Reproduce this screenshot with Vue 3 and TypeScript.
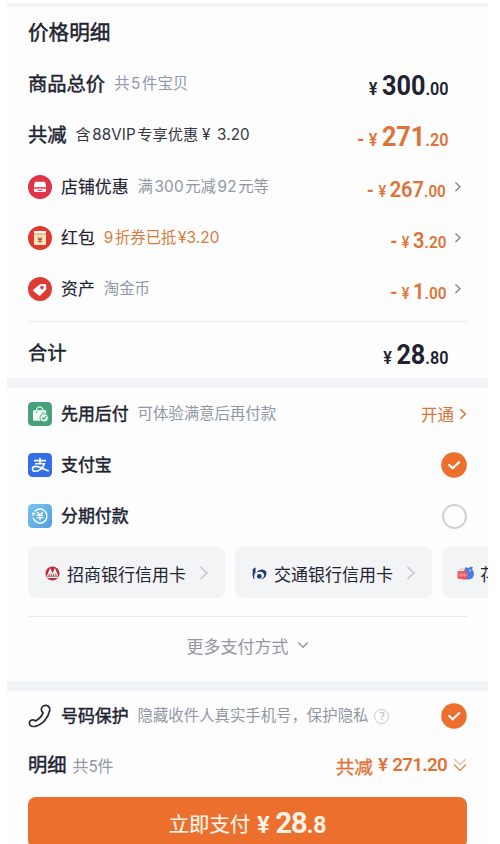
<script setup lang="ts">
interface Discount {
  icon: 'shop' | 'packet' | 'tag'
  label: string
  note: string[]
  accent?: boolean
  whole: string
  cents: string
}

const discounts: Discount[] = [
  { icon: 'shop', label: '店铺优惠', note: ['满', '300', '元减', '92', '元等'], whole: '267', cents: '.00' },
  { icon: 'packet', label: '红包', note: ['', '9', '折券已抵', '¥3.20'], accent: true, whole: '3', cents: '.20' },
  { icon: 'tag', label: '资产', note: ['淘金币'], whole: '1', cents: '.00' },
]
</script>

<template>
  <main class="sheet">
    <section class="details">
      <header class="row"><h1>价格明细</h1></header>
      <div class="row">
        <h2>商品总价</h2>
        <span class="note total-note">共<i>5</i>件宝贝</span>
        <span class="price big"><small>¥</small><b>300</b><em>.00</em></span>
      </div>
      <div class="row">
        <h2>共减</h2>
        <span class="note dark">含<i>88VIP</i>专享优惠<i class="yen">¥</i><i>3.20</i></span>
        <span class="price big orange"><s>-</s><small>¥</small><b>271</b><em>.20</em></span>
      </div>
      <div v-for="d in discounts" :key="d.label" class="row">
        <svg v-if="d.icon === 'shop'" class="icon" viewBox="0 0 24 24">
          <circle cx="12" cy="12" r="12" fill="#df3348" />
          <path d="M8 6.7h8q1 0 1.3 1l.7 3v1.6H6v-1.6l.7-3q.3-1 1.3-1z" fill="#fff" />
          <path d="M6 13.3q1.5 1.3 3 0q1.500 1.300 3 0q1.500 1.300 3 0q1.500 1.300 3 0v2.200q0 1.500-1.500 1.500h-9Q6 17 6 15.500z" fill="#fff" />
          <path d="M9.500 15.300h5" stroke="#df3348" stroke-width="1" />
        </svg>
        <svg v-else-if="d.icon === 'packet'" class="icon" viewBox="0 0 24 24">
          <circle cx="12" cy="12" r="12" fill="#e03a30" />
          <rect x="6" y="5" width="12" height="14" rx="1" fill="#fbe3bd" />
          <path d="M6 5h12v3H6z" fill="#fff8e9" />
          <path d="M6 8h12" stroke="#df6950" stroke-width=".8" />
          <path d="m10 11 2 2.500 2-2.500M9.800 13.500h4.400M9.800 15.300h4.400M12 13.500v3.500" fill="none" stroke="#a55b35" stroke-width="1.100" />
        </svg>
        <svg v-else class="icon" viewBox="0 0 24 24">
          <circle cx="12" cy="12" r="12" fill="#df3b34" />
          <path d="m5.500 12.600 6.200-5.200q.6-.5 1.400-.5h3.700q1.200 0 1.300 1.200l.2 3.600q0 .8-.5 1.400L12.500 18.200q-1 1-2 .1l-5-4q-.9-.9 0-1.700z" fill="#fff" />
          <circle cx="14" cy="10.600" r="1.800" fill="#cf4545" />
        </svg>
        <h3 class="regular">{{ d.label }}</h3>
        <span class="note" :class="{ accent: d.accent }"><template v-for="(part, n) in d.note" :key="n"><i v-if="n % 2">{{ part }}</i><template v-else>{{ part }}</template></template></span>
        <span class="price orange"><s>-</s><small>¥</small><b>{{ d.whole }}</b><em>{{ d.cents }}</em></span>
        <svg class="go" viewBox="0 0 8 12"><path d="m1.500 1.500 4.500 4.300-4.500 4.300" /></svg>
      </div>
      <div class="rule"></div>
      <div class="row sum">
        <h2>合计</h2>
        <span class="price big"><small>¥</small><b>28</b><em>.80</em></span>
      </div>
    </section>

    <section class="payment">
      <div class="row">
        <svg class="icon" viewBox="0 0 24 24">
          <rect width="24" height="24" rx="4.500" fill="#48a17b" />
          <path d="M8.500 9V7.800Q9 4.800 11.700 4.800T14.900 7.800V9" fill="none" stroke="#d7f1e5" stroke-width="1.200" />
          <path d="M6 8.300h11.200q1 0 1 1V13l-5 5.800H6.500q-1.500 0-1.500-1.500v-8q0-1 1-1z" fill="#effff7" />
          <circle cx="8.600" cy="10.300" r=".7" fill="#48a17b" /><circle cx="14.900" cy="10.300" r=".7" fill="#48a17b" />
          <circle cx="16.200" cy="15.800" r="4.100" fill="#e9fff5" stroke="#48a17b" stroke-width=".9" />
          <path d="m14.200 15.700 1.600 1.500 2.700-3" fill="none" stroke="#48a17b" stroke-width="1.200" />
        </svg>
        <h3>先用后付</h3>
        <span class="note">可体验满意后再付款</span>
        <a class="open">开通<svg viewBox="0 0 8 12"><path d="m1.300 1.200 5 4.800-5 4.800" /></svg></a>
      </div>
      <div class="row">
        <svg class="icon" viewBox="0 0 24 24">
          <rect width="24" height="24" rx="4.500" fill="#346fe7" />
          <path d="M6 7.600h12M12 4.700v5.600M7.200 10.700h9.200C15 15 11.200 18.200 7.300 18.200c-3.700 0-3.900-4.600.2-4.800 4.400-.2 8.300 3 13.300 4.700" fill="none" stroke="#fff" stroke-width="1.600" />
        </svg>
        <h3>支付宝</h3>
        <svg class="check" viewBox="0 0 26 26"><circle cx="13" cy="13" r="12.800" /><path d="m8.300 13 3.300 3.300 6.500-6.100" /></svg>
      </div>
      <div class="row">
        <svg class="icon" viewBox="0 0 24 24">
          <defs><linearGradient id="sky" x2="1" y2="1"><stop stop-color="#76c5ed" /><stop offset="1" stop-color="#559ee1" /></linearGradient></defs>
          <rect width="24" height="24" rx="4.500" fill="url(#sky)" />
          <path d="M6.600 7.500a7 7 0 1 1-1.400 6.300M5 11.700V8.600M5 9.700l2.600-.2" fill="none" stroke="#fff" stroke-width="1.400" />
          <path d="m9.200 8 2.800 3.200L14.800 8M8.700 11.300h6.600M8.700 13.700h6.600M12 11v5.600" fill="none" stroke="#fff" stroke-width="1.300" />
        </svg>
        <h3>分期付款</h3>
        <span class="radio"></span>
      </div>
      <div class="banks">
        <div class="bank">
          <svg class="logo" viewBox="0 0 16 16">
            <circle cx="8" cy="8" r="7.500" fill="#b72e3e" />
            <path d="m2.600 11 2.900-7.200L8 9.700l2.500-5.900 2.900 7.200M5.500 5v6M10.500 5v6M2.300 12.200h11.400" fill="none" stroke="#fff" stroke-width="1.250" />
          </svg>
          <span>招商银行信用卡</span>
          <svg class="chip-go" viewBox="0 0 10 16"><path d="m1.500 2 6.500 6-6.500 6" /></svg>
        </div>
        <div class="bank">
          <svg class="logo" viewBox="0 0 16 16">
            <path d="M3.800 1.500v5.400Q1.500 9.400 2.800 14.500-.2 12 .8 7.500V3.200z" fill="#223c73" />
            <path d="M4.600 7C7.500 2.700 14 3 15.200 6.500c1 4-2 7.500-6 7.800 3.700-2.100 4.400-4.100 3.300-6.200C11 5.700 7.400 5.600 4.600 7z" fill="#223c73" />
            <circle cx="7.800" cy="11" r="2.500" fill="#223c73" />
          </svg>
          <span>交通银行信用卡</span>
          <svg class="chip-go" viewBox="0 0 10 16"><path d="m1.500 2 6.500 6-6.500 6" /></svg>
        </div>
        <div class="bank">
          <svg class="logo flower" viewBox="0 0 18 16">
            <path d="M7 4.500 9 2l2 1.300q2-2.300 5-1.300l-1.100 2q2.400 2 2.100 5.300-.4 4.700-5.400 5.100H6z" fill="#477ce4" />
            <path d="M1.500 6h9.200v7.500q-4.500 1.500-10.200 0V7z" fill="#e9585c" />
            <path d="M1.500 10h8.700M4 7.800V12M7.300 7.800V12M3.500 5.500V4h4v1.500" stroke="#f7a8a8" stroke-width=".8" fill="none" />
            <circle cx="13" cy="5.500" r="1" fill="#b9d4ff" />
          </svg>
          <span>花呗</span>
        </div>
      </div>
      <div class="rule second"></div>
      <div class="more">更多支付方式<svg viewBox="0 0 12 8"><path d="m1.300 1.500 4.700 4.700 4.700-4.700" /></svg></div>
    </section>

    <section class="checkout">
      <div class="row privacy">
        <svg class="icon phone" viewBox="0 0 24 24">
          <path d="M15.700 1.800C18.600.4 22.400 2.300 21.700 6.500 20.300 14 14.500 20.700 7.200 22.300 3 23.200.8 21 1.600 17.900 2.100 16.300 4.600 15.200 6.500 16.300L7.600 17C11.400 14.800 13.800 12 15.100 8.600 12.500 6.700 12.800 3.300 15.700 1.800z" />
        </svg>
        <h3>号码保护</h3>
        <span class="note">隐藏收件人真实手机号，保护隐私</span>
        <span class="help">?</span>
        <svg class="check" viewBox="0 0 26 26"><circle cx="13" cy="13" r="12.800" /><path d="m8.300 13 3.300 3.300 6.500-6.100" /></svg>
      </div>
      <div class="row summary">
        <h2>明细</h2>
        <span class="count">共5件</span>
        <span class="saved">共减<b class="saved-yen">¥</b><b>271.20</b><svg viewBox="0 0 14 14"><path class="faint" d="m1 1 6 5.500L13 1" /><path d="m1 6.500 6 6 6-6" /></svg></span>
      </div>
      <button type="button">立即支付<span class="pay"><small>¥</small><b>28</b><em>.8</em></span></button>
    </section>
  </main>
</template>

<style>
body { background: #fff; overflow: hidden; }
</style>

<style scoped>
* { box-sizing: border-box; }
.sheet {
  width: 481px;
  height: 844px;
  margin-left: 7px;
  padding-top: 3px;
  overflow: hidden;
  background: #fdfdfd;
  color: #20222f;
  font-family: Inter, "Noto Sans CJK SC", sans-serif;
  white-space: nowrap;
}
section { padding: 0 21px; }
.details { border-top: 4px solid #f4f4f6; height: 375px; }
.row { display: flex; align-items: center; height: 51.35px; }
h1, h2, h3 { margin: 0; font-weight: 400; -webkit-text-stroke: .45px currentColor; }
h1 { font-size: 20.6px; line-height: 30px; }
h2 { font-size: 19.3px; line-height: 28px; }
h3 { font-size: 16.9px; line-height: 26px; }
h3.regular { -webkit-text-stroke-width: .12px; }
i, em { font-style: normal; }
.icon { flex: none; width: 24px; height: 24px; margin-right: 9px; }
.note { margin-left: 9px; color: #9297a6; font-size: 15.4px; line-height: 24px; }
.note i { margin: 0 1.5px; letter-spacing: .1px; }
.note.dark { color: #333541; font-size: 15.2px; }
.note.dark .yen { margin: 0 5px 0 4px; }
.note.accent { color: #d77b3e; }
.note.accent i:first-child { margin-left: 0; }
.price {
  display: flex;
  align-items: baseline;
  margin-left: auto;
  margin-right: 19px;
  padding-top: 4px;
  font-family: Roboto, sans-serif;
  font-weight: 700;
  transform: scaleX(.9);
  transform-origin: right;
}
.price b { font-size: 22.300px; line-height: 26px; font-weight: 600; }
.price small { margin-right: 4px; font-size: 16px; font-weight: 500; }
.price em { font-size: 17px; font-weight: 600; }
.price s { margin-right: 5px; text-decoration: none; font-size: 20px; }
.price.big b { font-size: 28px; line-height: 32px; font-weight: 700; }
.price.big small { font-size: 18px; margin-right: 5px; font-weight: 600; }
.price.big em { font-size: 18px; }
.orange { color: #dd7338; }
.row > .go { width: 8px; height: 12px; margin-left: -11px; margin-right: 5px; fill: none; stroke: #858791; stroke-width: 1.400; }
.rule { height: 1px; margin-top: 6px; background: #eaeaed; }
.sum { height: 56px; padding-top: 5px; }
.payment { height: 303px; border-top: 10px solid #f3f4f7; }
.open { display: flex; align-items: center; gap: 5px; margin-left: auto; color: #d87637; font-size: 16.500px; }
.open svg { width: 8px; height: 12px; fill: none; stroke: currentColor; stroke-width: 1.500; }
.check { width: 26px; height: 26px; margin-left: auto; }
.check circle { fill: #ec6f2d; }
.check path { fill: none; stroke: #fff; stroke-width: 2.200; stroke-linecap: round; stroke-linejoin: round; }
.radio { width: 25px; height: 25px; margin-left: auto; border: 2px solid #d0d1d9; border-radius: 50%; }
.banks { display: flex; gap: 10px; margin: 5px -21px 0 0; overflow: hidden; }
.bank { display: flex; flex: none; align-items: center; width: 197px; height: 51px; padding: 1px 16px 0 17px; border-radius: 8px; background: #f3f4f6; font-size: 17px; }
.logo { width: 15px; height: 15px; margin-right: 7px; }
.flower { width: 18px; height: 16px; margin-left: -2px; margin-right: 5px; }
.chip-go { width: 10px; height: 16px; margin-left: auto; fill: none; stroke: #c4c5cb; stroke-width: 1.500; }
.rule.second { margin-top: 18px; }
.more { display: flex; align-items: center; justify-content: center; gap: 8px; height: 56px; color: #9296a1; font-size: 17px; }
.more svg { width: 12px; height: 8px; fill: none; stroke: currentColor; stroke-width: 1.500; }
.checkout { border-top: 10px solid #f2f3f6; }
.privacy { height: 50px; }
.phone { fill: none; stroke: #282a34; stroke-width: 1.700; stroke-linejoin: round; }
.help { display: flex; align-items: center; justify-content: center; width: 15px; height: 15px; margin-left: 6px; border: 1px solid #c8cad0; border-radius: 50%; color: #b4b6bd; font-size: 11px; }
.summary { height: 48px; }
.count { margin-left: 6px; color: #9297a6; font-size: 16px; font-family: Roboto, "Noto Sans CJK SC", sans-serif; }
.saved { display: flex; align-items: center; margin-left: auto; color: #dd7338; font-size: 18.600px; -webkit-text-stroke: .35px currentColor; }
.saved b { font-family: Roboto, sans-serif; font-size: 18.800px; font-weight: 600; letter-spacing: -.7px; -webkit-text-stroke: 0; }
.saved .saved-yen { margin: 0 5px; }
.saved svg { width: 14px; height: 14px; margin-left: 6px; fill: none; stroke: #dd884f; stroke-width: 1.300; -webkit-text-stroke: 0; }
.faint { opacity: .55; }
button { display: flex; align-items: center; justify-content: center; width: 100%; height: 51px; margin: 8px 0 0; padding: 0; border: 0; border-radius: 8px; background: #ec6f2d; color: #fff5e8; font: 400 20.400px Inter, "Noto Sans CJK SC", sans-serif; -webkit-text-stroke: .2px currentColor; }
.pay { display: flex; align-items: baseline; margin-left: 7px; font-family: Roboto, sans-serif; font-weight: 600; }
.pay small { margin-right: 6px; font-size: 23px; }
.pay b { font-size: 29px; letter-spacing: -1px; font-weight: 600; }
.pay em { font-size: 23px; }
</style>
